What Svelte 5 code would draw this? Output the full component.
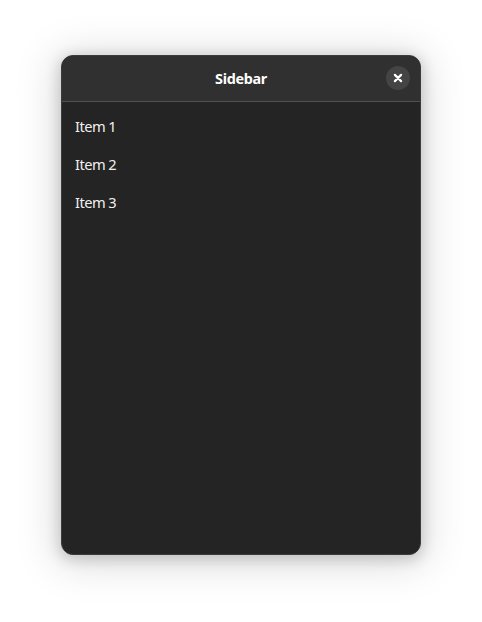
<script>
  const items = ['Item 1', 'Item 2', 'Item 3'];
</script>

<main>
  <section class="window">
    <header>
      <h1>Sidebar</h1>
      <button aria-label="Close">
        <svg viewBox="0 0 16 16" width="16" height="16"><path d="M4.9 4.9 11.1 11.1M11.1 4.9 4.9 11.1" /></svg>
      </button>
    </header>
    <ul>
      {#each items as item}
        <li>{item}</li>
      {/each}
    </ul>
  </section>
</main>

<style>
  :global(body) { margin: 0; background: #fff; }
  main {
    box-sizing: border-box;
    width: 482px;
    height: 622px;
    padding: 55px 61px 67px;
    overflow: hidden;
    font-family: "Noto Sans", sans-serif;
    font-size: 14.67px;
    color: #fff;
  }
  .window {
    box-sizing: border-box;
    height: 500px;
    border: 1px solid #3b3d3d;
    border-radius: 12px;
    background: #242424;
    box-shadow: 0 3px 14px 2px rgba(0, 0, 0, 0.17), 0 4px 40px 7px rgba(0, 0, 0, 0.13);
    overflow: hidden;
  }
  header {
    box-sizing: border-box;
    height: 46px;
    padding-bottom: 1px;
    display: grid;
    grid-template-columns: 34px 1fr 34px;
    align-items: center;
    background: #303030;
    border-bottom: 1px solid #505050;
  }
  h1 {
    grid-column: 2;
    margin: 0;
    padding-top: 2px;
    text-align: center;
    font-size: 14.4px;
    letter-spacing: -0.3px;
    font-weight: 700;
    line-height: 20px;
  }
  button {
    display: grid;
    place-items: center;
    width: 24px;
    height: 24px;
    padding: 0;
    border: 0;
    border-radius: 50%;
    background: #444;
  }
  svg { fill: none; stroke: #fff; stroke-width: 2.2; stroke-linecap: round; }
  ul { list-style: none; margin: 0; padding: 5px 6px; }
  li {
    height: 38px;
    line-height: 38px;
    padding-left: 7px;
    color: #f0f0f0;
    letter-spacing: -0.5px;
    word-spacing: -0.3px;
  }
</style>
